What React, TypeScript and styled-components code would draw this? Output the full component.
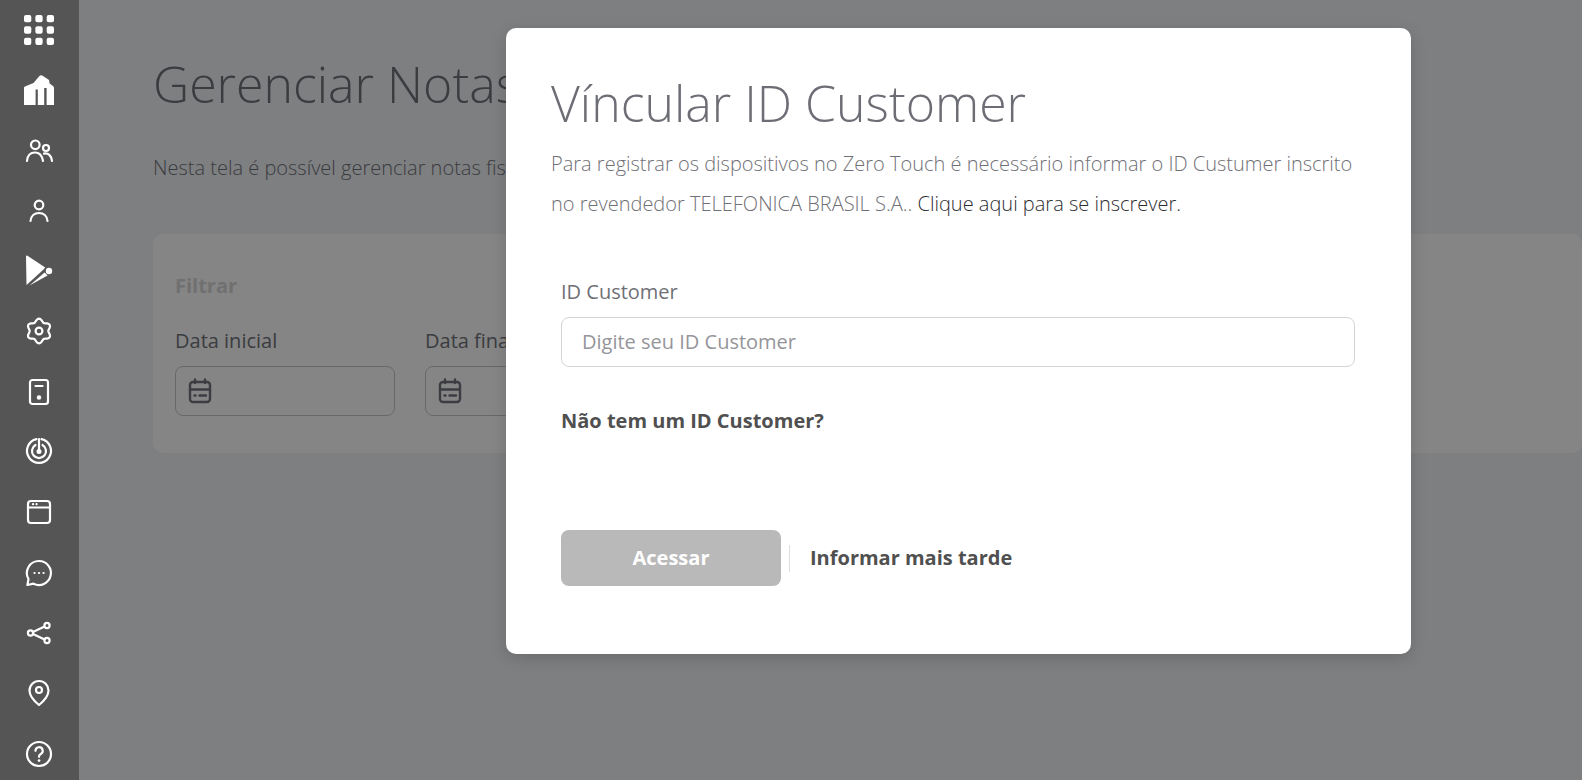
import React from 'react';

import styled, { createGlobalStyle } from 'styled-components';

const GlobalStyle = createGlobalStyle`
  html, body {
    margin: 0;
    padding: 0;
    height: 100%;
  }

  body {
    font-family: "Open Sans", "Liberation Sans", sans-serif;
    overflow: hidden;
  }

  * {
    box-sizing: border-box;
  }
`;

const Page = styled.div`
  display: flex;
  width: 100%;
  height: 780px;
  overflow: hidden;
`;

const Sidebar = styled.nav`
  flex: 0 0 79px;
  display: flex;
  flex-direction: column;
  align-items: center;
  padding-right: 1px;
  background: #555555;
`;

const NavItem = styled.div`
  flex: 0 0 60.25px;
  display: flex;
  align-items: center;
  justify-content: center;
  color: #ffffff;
`;

const Main = styled.main`
  position: relative;
  flex: 1;
  min-width: 0;
  padding: 48px 0 0 74px;
  background: #f1f3f7;
  overflow: hidden;
`;

const PageTitle = styled.h1`
  margin: 0;
  font-size: 50px;
  line-height: 72px;
  font-weight: 300;
  color: #72737b;
  white-space: nowrap;
`;

const PageCaption = styled.p`
  margin: 34px 0 0;
  font-size: 20px;
  line-height: 28px;
  font-weight: 300;
  color: #72737b;
  white-space: nowrap;
`;

const FilterCard = styled.section`
  margin-top: 52px;
  height: 219px;
  padding: 38px 22px 0;
  border-radius: 10px;
  background: #ffffff;
`;

const FilterTitle = styled.h2`
  margin: 0;
  font-size: 20px;
  line-height: 28px;
  font-weight: 700;
  color: #d6d6d8;
`;

const FilterRow = styled.div`
  display: flex;
  gap: 30px;
  margin-top: 27px;
`;

const DateField = styled.div`
  width: 220px;
`;

const DateLabel = styled.label`
  display: block;
  font-size: 20px;
  line-height: 28px;
  color: #72737b;
`;

const DateInput = styled.div`
  display: flex;
  align-items: center;
  height: 50px;
  margin-top: 11px;
  padding-left: 12px;
  border: 1px solid #c8c8ca;
  border-radius: 8px;
  color: #747580;
`;

const Overlay = styled.div`
  position: absolute;
  inset: 0;
  display: flex;
  align-items: flex-start;
  padding: 28px 0 0 427px;
  background: rgba(0, 0, 0, 0.478);
`;

const Modal = styled.div`
  flex: 0 0 905px;
  height: 626px;
  padding: 40px 45px 0;
  border-radius: 10px;
  background: #ffffff;
  box-shadow: 0 4px 16px rgba(0, 0, 0, 0.16);
`;

const ModalTitle = styled.h2`
  margin: 0;
  font-size: 50px;
  line-height: 70px;
  font-weight: 300;
  color: #6c6d75;
  white-space: nowrap;
`;

const ModalText = styled.p`
  margin: 6px 0 0;
  font-size: 20px;
  line-height: 40px;
  font-weight: 300;
  color: #707076;
`;

const ModalLink = styled.a`
  color: #2e2e33;
`;

const Form = styled.div`
  padding: 0 11px 0 10px;
  margin-top: 54px;
`;

const FieldLabel = styled.label`
  display: block;
  font-size: 20px;
  line-height: 28px;
  color: #6f7076;
`;

const TextInput = styled.input`
  display: block;
  width: 100%;
  height: 50px;
  margin-top: 11px;
  padding: 0 20px 2px;
  border: 1px solid #d4d4d6;
  border-radius: 8px;
  outline: none;
  font-family: inherit;
  font-size: 20px;
  color: #6f7076;

  &::placeholder {
    color: #95959a;
    opacity: 1;
  }
`;

const HelpText = styled.div`
  margin-top: 40px;
  font-size: 20px;
  line-height: 28px;
  font-weight: 700;
  color: #505050;
`;

const Actions = styled.div`
  display: flex;
  align-items: center;
  margin-top: 95px;
`;

const PrimaryButton = styled.button`
  width: 220px;
  height: 56px;
  padding: 0 0 2px;
  border: 0;
  border-radius: 8px;
  background: #b9b9b9;
  font-family: inherit;
  font-size: 20px;
  font-weight: 700;
  color: #ffffff;
`;

const Divider = styled.span`
  width: 1px;
  height: 27px;
  margin: 0 20px 0 8px;
  background: #dedede;
`;

const LaterLink = styled.a`
  padding-bottom: 2px;
  font-size: 20px;
  font-weight: 700;
  color: #505050;
`;

const Grid = () => (
  <svg width="30" height="30" viewBox="0 0 30 30" fill="currentColor">
    {[0, 11.35, 22.7].flatMap((y) =>
      [0, 11.35, 22.7].map((x) => (
        <rect key={`${x}-${y}`} x={x} y={y} width="7.3" height="7.3" rx="2" />
      )),
    )}
  </svg>
);

const Icon = ({ children }: { children: React.ReactNode }) => (
  <svg
    width="32"
    height="32"
    viewBox="0 0 32 32"
    fill="none"
    stroke="currentColor"
    strokeWidth="2.2"
    strokeLinecap="round"
    strokeLinejoin="round"
  >
    {children}
  </svg>
);

const House = () => (
  <svg width="32" height="32" viewBox="0 0 32 32">
    <path
      fill="#ffffff"
      d="M1 14 Q1 12.8 2 12.4 L10.5 9 L16 2.4 Q17.8 0.4 20 2 L26 6 L26.6 9.5 L30 12 Q31 13 31 14 L31 31 L1 31 Z"
    />
    <rect x="12.6" y="15.5" width="2.2" height="15.5" fill="#555555" />
    <rect x="21.2" y="14" width="2.4" height="17" fill="#555555" />
  </svg>
);

const Users = () => (
  <Icon>
    <circle cx="12.3" cy="9.8" r="4.3" />
    <path d="M4 26 C4.5 20 8 17.5 12 17.5 C15.5 17.5 19 20 20 26" />
    <circle cx="23" cy="13" r="3" />
    <path d="M21 18.6 C25 17.6 28.5 20.5 29 26" />
  </Icon>
);

const User = () => (
  <Icon>
    <circle cx="16" cy="10" r="4.3" />
    <path d="M7.5 26 C8 21 11.5 18 16 18 C20.5 18 24 21 24.5 26" />
  </Icon>
);

const Play = () => (
  <svg width="32" height="32" viewBox="0 0 32 32" fill="#ffffff">
    <path d="M3 1.5 Q3 0 4.5 0.8 L22.2 12.6 L20 15 L3.5 30 Z" />
    <path d="M21.6 17.6 L6.5 30.5 L24.6 20.4 Z" />
    <circle cx="26" cy="16" r="3.2" />
  </svg>
);

const gearPath = (() => {
  const points: string[] = [];
  for (let i = 0; i <= 120; i += 1) {
    const angle = (i / 120) * Math.PI * 2;
    const radius = 10.8 + 1.5 * Math.cos(6 * angle);
    const x = 16 + radius * Math.sin(angle);
    const y = 16 - radius * Math.cos(angle);
    points.push(`${i === 0 ? 'M' : 'L'}${x.toFixed(2)} ${y.toFixed(2)}`);
  }
  return `${points.join(' ')} Z`;
})();

const Gear = () => (
  <Icon>
    <path d={gearPath} />
    <circle cx="16" cy="16" r="3.4" />
  </Icon>
);

const Device = () => (
  <Icon>
    <rect x="7" y="4" width="18" height="24" rx="2.5" />
    <path d="M12.5 10 H19.5" />
    <circle cx="16" cy="21.5" r="1.2" fill="currentColor" />
  </Icon>
);

const Radar = () => (
  <Icon>
    <path d="M18.5 3.2 A12 12 0 1 1 13.5 3.2" />
    <path d="M19.5 9 A7 7 0 1 1 12.5 9" />
    <path d="M16 3 V15" />
    <circle cx="16" cy="15.5" r="1.4" fill="currentColor" />
  </Icon>
);

const BrowserWindow = () => (
  <Icon>
    <rect x="5" y="5" width="22" height="22" rx="3" />
    <path d="M5 11.5 H27" />
    <path d="M10 8.2 H10.1 M13.5 8.2 H13.6" />
  </Icon>
);

const Chat = () => (
  <Icon>
    <path d="M16 5 A12 12 0 1 1 10.5 27.7 L4.4 29 L5.5 23 A12 12 0 0 1 16 5 Z" />
    <path d="M11.5 17 H11.6 M16 17 H16.1 M20.5 17 H20.6" />
  </Icon>
);

const Share = () => (
  <Icon>
    <circle cx="7.5" cy="16" r="2.6" />
    <circle cx="24" cy="8.5" r="2.6" />
    <circle cx="24" cy="23.5" r="2.6" />
    <path d="M10 15 L21.6 9.6 M10 17 L21.6 22.4" />
  </Icon>
);

const Pin = () => (
  <Icon>
    <path d="M16 28 C10.5 23.5 6.5 19.5 6.5 13.5 A9.5 9.5 0 0 1 25.5 13.5 C25.5 19.5 21.5 23.5 16 28 Z" />
    <circle cx="16" cy="13" r="3" />
  </Icon>
);

const Help = () => (
  <Icon>
    <circle cx="16" cy="17" r="12" />
    <path d="M12.5 13.8 A3.6 3.6 0 1 1 17.8 17 C16.6 17.7 16 18.4 16 19.8" />
    <path d="M16 23.6 H16.1" strokeWidth="2.6" />
  </Icon>
);

const Calendar = () => (
  <svg
    width="24"
    height="26"
    viewBox="0 0 24 26"
    fill="none"
    stroke="currentColor"
    strokeWidth="2.4"
    strokeLinecap="round"
    strokeLinejoin="round"
  >
    <rect x="2" y="4" width="20" height="20" rx="3" />
    <path d="M2 11.5 H22 M7 1.5 V5 M17 1.5 V5 M6.5 17.5 H7.5 M11.5 17.5 H18" />
  </svg>
);

const navIcons = [
  Grid,
  House,
  Users,
  User,
  Play,
  Gear,
  Device,
  Radar,
  BrowserWindow,
  Chat,
  Share,
  Pin,
  Help,
];

function App() {
  return (
    <Page>
      <GlobalStyle />
      <Sidebar>
        {navIcons.map((NavIcon, index) => (
          <NavItem key={index}>
            <NavIcon />
          </NavItem>
        ))}
      </Sidebar>
      <Main>
        <PageTitle>Gerenciar Notas Fiscais</PageTitle>
        <PageCaption>Nesta tela é possível gerenciar notas fiscais</PageCaption>
        <FilterCard>
          <FilterTitle>Filtrar</FilterTitle>
          <FilterRow>
            <DateField>
              <DateLabel>Data inicial</DateLabel>
              <DateInput>
                <Calendar />
              </DateInput>
            </DateField>
            <DateField>
              <DateLabel>Data final</DateLabel>
              <DateInput>
                <Calendar />
              </DateInput>
            </DateField>
          </FilterRow>
        </FilterCard>
        <Overlay>
          <Modal>
            <ModalTitle>Víncular ID Customer</ModalTitle>
            <ModalText>
              Para registrar os dispositivos no Zero Touch é necessário informar
              o ID Custumer inscrito no revendedor TELEFONICA BRASIL S.A..{' '}
              <ModalLink>Clique aqui para se inscrever.</ModalLink>
            </ModalText>
            <Form>
              <FieldLabel>ID Customer</FieldLabel>
              <TextInput placeholder="Digite seu ID Customer" />
              <HelpText>Não tem um ID Customer?</HelpText>
              <Actions>
                <PrimaryButton>Acessar</PrimaryButton>
                <Divider />
                <LaterLink>Informar mais tarde</LaterLink>
              </Actions>
            </Form>
          </Modal>
        </Overlay>
      </Main>
    </Page>
  );
}

export default App;
